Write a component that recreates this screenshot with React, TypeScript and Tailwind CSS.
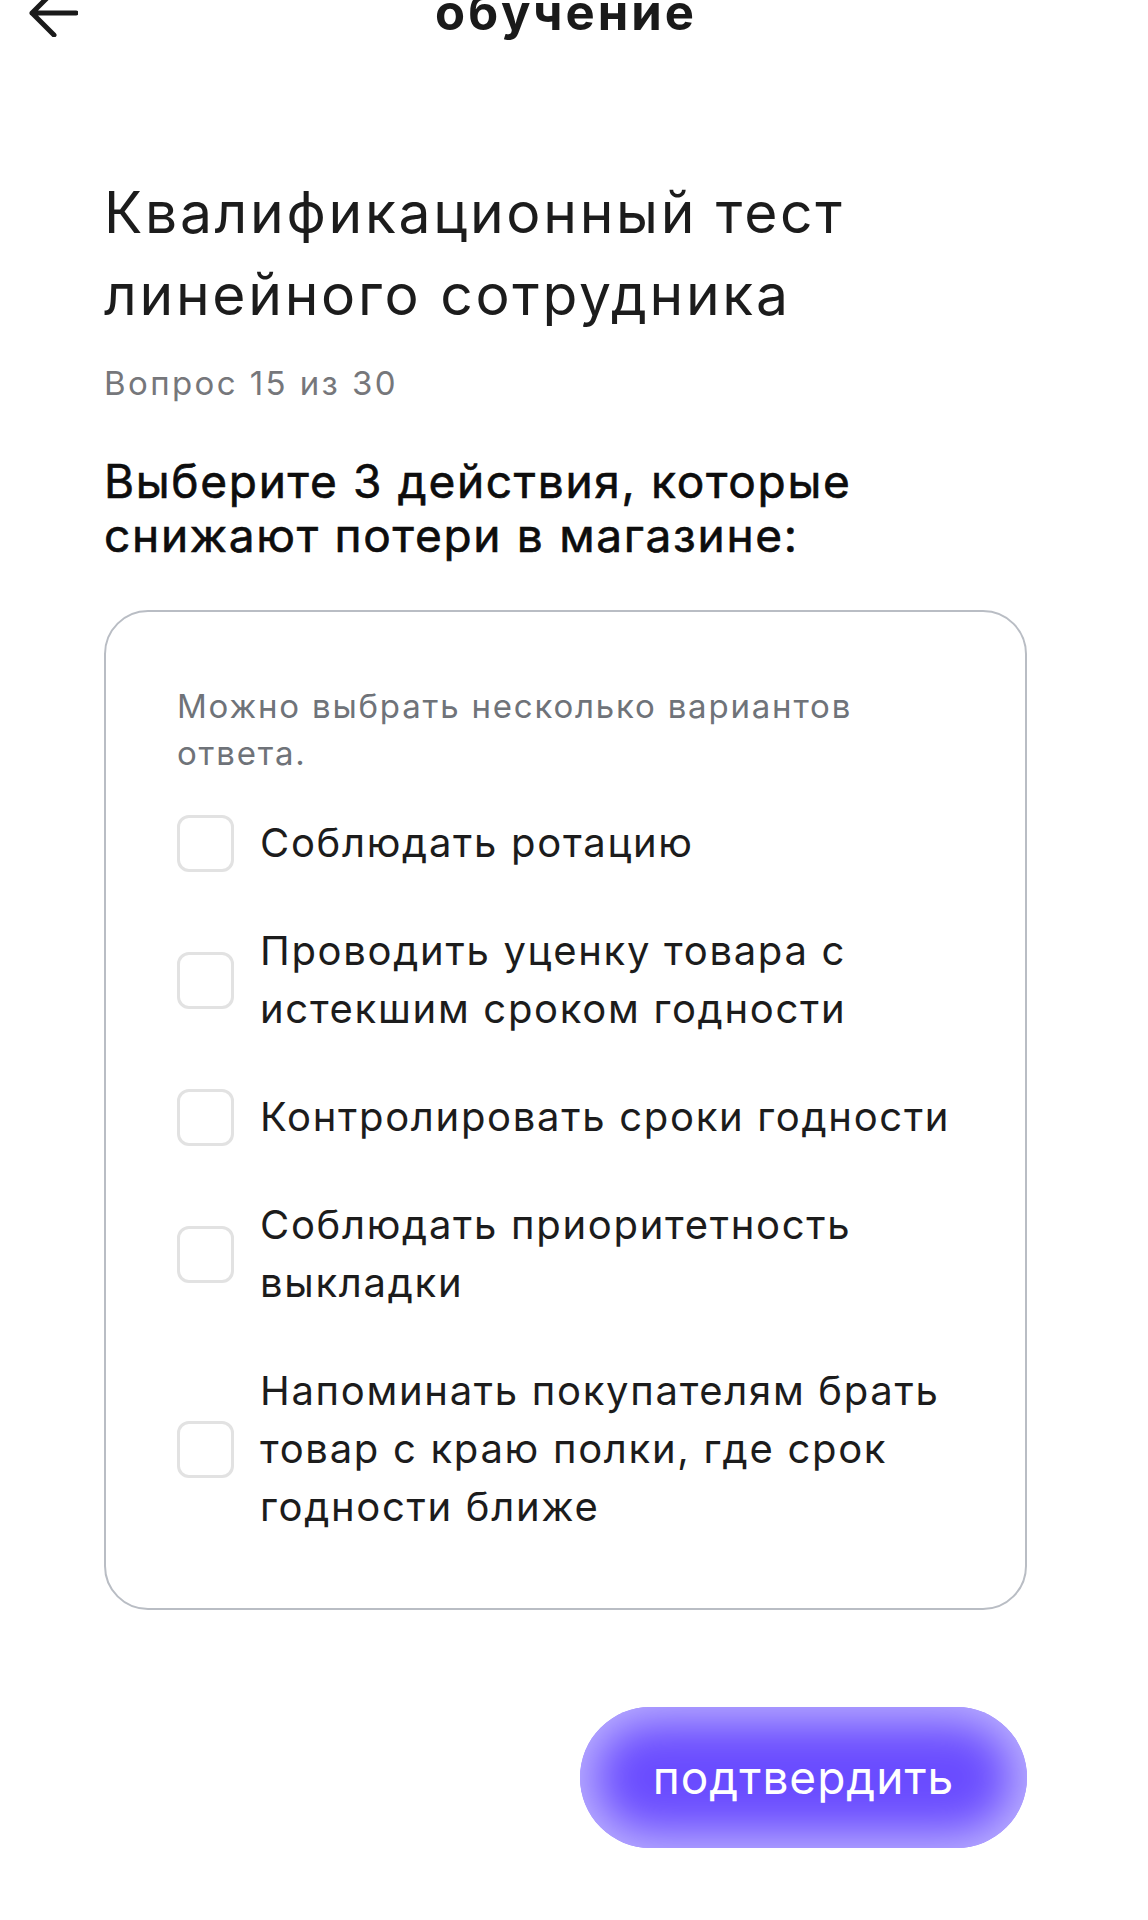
import { useState } from "react";

const options = [
  "Соблюдать ротацию",
  "Проводить уценку товара с истекшим сроком годности",
  "Контролировать сроки годности",
  "Соблюдать приоритетность выкладки",
  "Напоминать покупателям брать товар с краю полки, где срок годности ближе",
];

function BackArrow() {
  return (
    <svg width="52" height="48" viewBox="0 0 52 48" fill="none" className="shrink-0">
      <path
        d="M6 24 H50 M6 24 L28 2 M6 24 L28 46"
        stroke="#1a1a1a"
        strokeWidth="5"
        strokeLinecap="round"
        strokeLinejoin="round"
      />
    </svg>
  );
}

function Option({ label, checked, onToggle }: { label: string; checked: boolean; onToggle: () => void }) {
  return (
    <button type="button" onClick={onToggle} className="flex items-center gap-[26px] text-left">
      <span
        className={`h-[57px] w-[57px] shrink-0 rounded-[12px] border-[3px] ${
          checked ? "border-[#6a4cff] bg-[#6a4cff]" : "border-[#e2e2e2] bg-white"
        }`}
      />
      <span className="text-[40px] leading-[58px] tracking-[1.7px] text-[#1c1c1c]">{label}</span>
    </button>
  );
}

export default function App() {
  const [selected, setSelected] = useState<number[]>([]);

  function toggle(i: number) {
    setSelected((prev) => (prev.includes(i) ? prev.filter((x) => x !== i) : [...prev, i]));
  }

  return (
    <div className="min-h-[1920px] w-[1148px] overflow-hidden bg-white font-['Inter',sans-serif]">
      <div className="-mt-[11px] grid h-[48px] grid-cols-[1fr_auto_1fr] items-center">
        <div className="pl-[26px]">
          <BackArrow />
        </div>
        <h1 className="-translate-x-[8px] text-[49px] font-bold leading-[48px] tracking-[3px] text-[#1a1a1a]">
          обучение
        </h1>
        <div />
      </div>

      <div className="pl-[104px] pr-[121px]">
        <h2 className="mt-[135px] text-[57px] leading-[82px] tracking-[2.7px] text-[#1c1c1c]">
          Квалификационный тест
          <br />
          линейного сотрудника
        </h2>
        <p className="mt-[27px] text-[33px] leading-[40px] tracking-[2.4px] text-[#76777b]">Вопрос 15 из 30</p>
        <p className="mt-[51px] text-[46px] font-normal leading-[54px] tracking-[1.7px] text-[#0d0d0d] [-webkit-text-stroke:0.6px_#0d0d0d]">
          Выберите 3 действия, которые
          <br />
          снижают потери в магазине:
        </p>

        <div className="mt-[48px] flex h-[1000px] flex-col rounded-[44px] border-2 border-[#b9bdc4] pl-[71px] pr-[30px] pt-[71px]">
          <p className="text-[33px] leading-[47px] tracking-[1.8px] text-[#6f7379]">
            Можно выбрать несколько вариантов
            <br />
            ответа.
          </p>
          <div className="mt-[37px] flex flex-col gap-[50px]">
            {options.map((label, i) => (
              <Option key={label} label={label} checked={selected.includes(i)} onToggle={() => toggle(i)} />
            ))}
          </div>
        </div>

        <div className="mt-[97px] flex justify-end">
          <button
            type="button"
            className="flex h-[141px] w-[447px] items-center justify-center rounded-full bg-[#6a4cff] text-[46px] font-normal tracking-[1px] text-white shadow-[inset_0_0_46px_14px_rgba(205,198,255,0.85)]"
          >
            подтвердить
          </button>
        </div>
      </div>
    </div>
  );
}
